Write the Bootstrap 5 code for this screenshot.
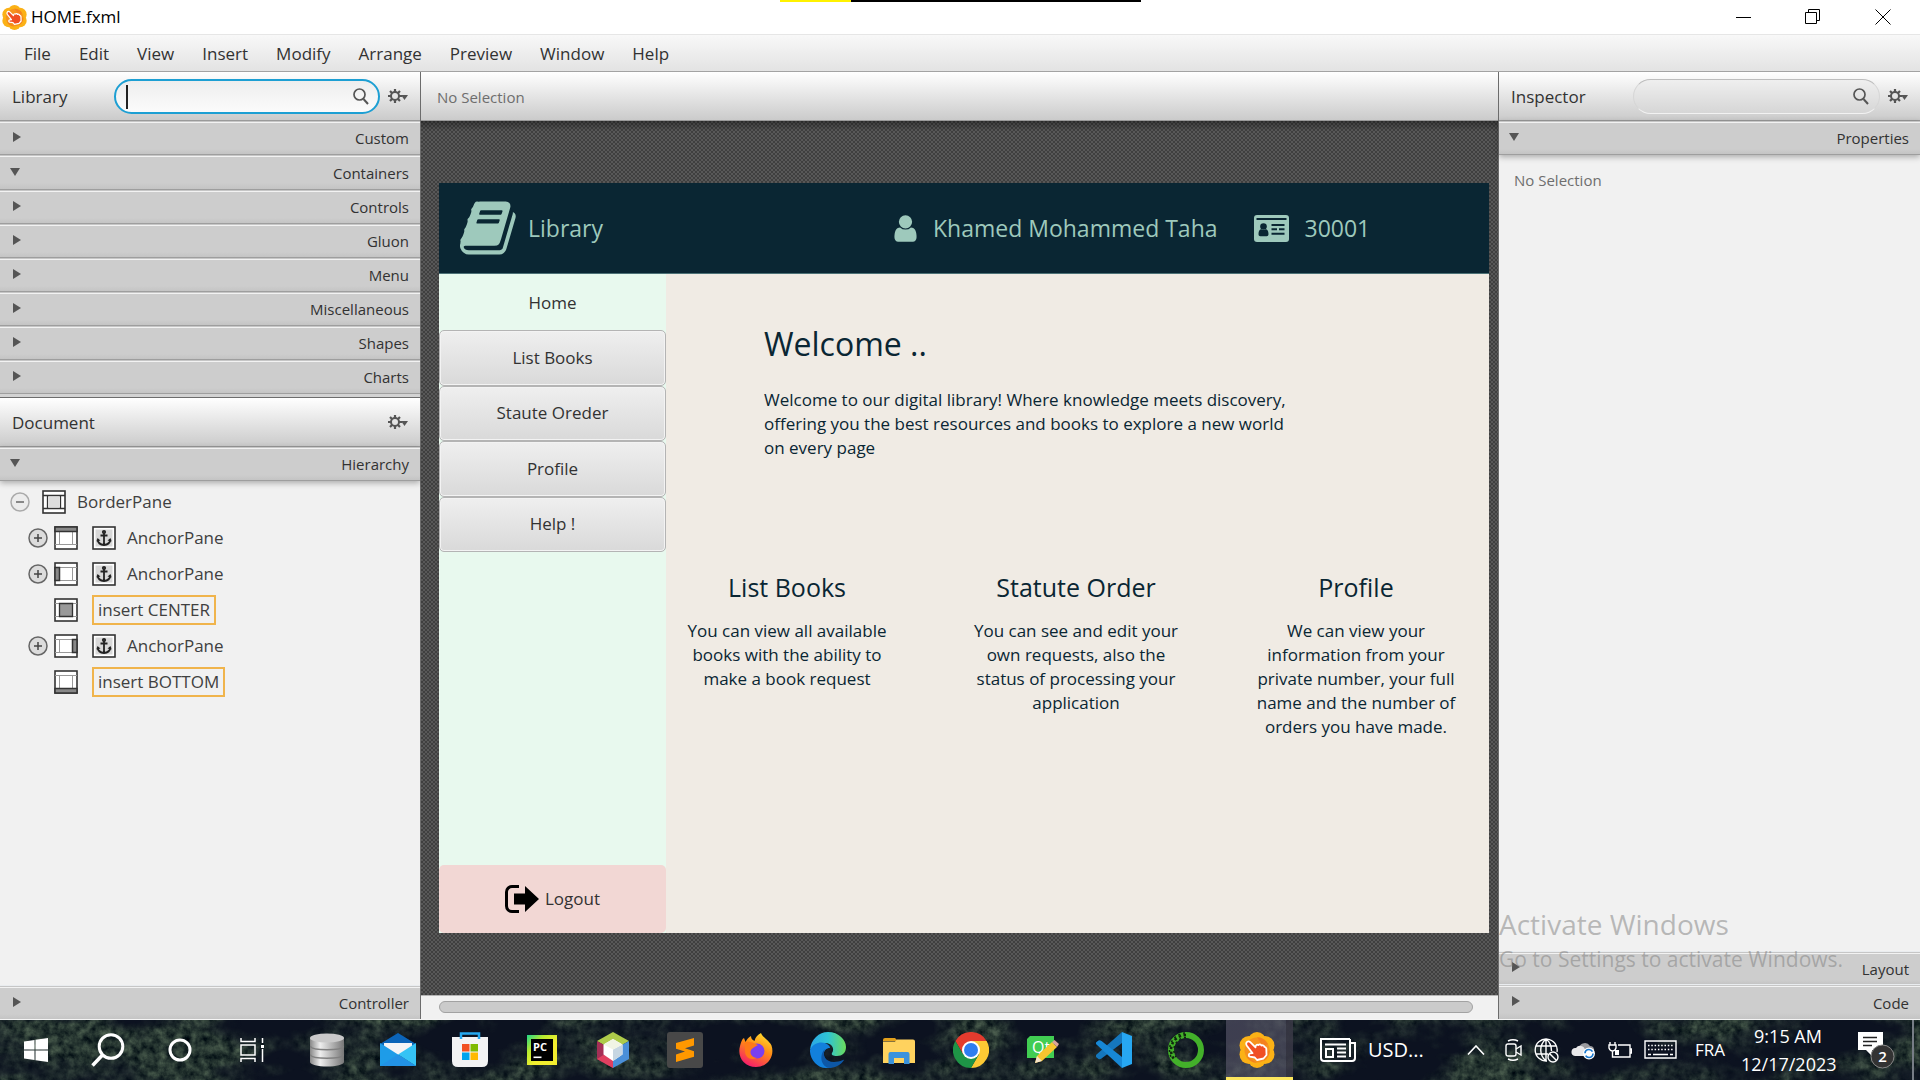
<!DOCTYPE html>
<html lang="en">
<head>
<meta charset="utf-8">
<meta name="viewport" content="width=device-width, initial-scale=1">
<title>HOME.fxml</title>
<link href="https://cdn.jsdelivr.net/npm/bootstrap@5.3.0/dist/css/bootstrap.min.css" rel="stylesheet">
<style>
  body { font-family: "Open Sans", "Noto Sans", sans-serif; font-size: 17px; line-height: 24px; color: #323232; background: #f1f1f1; min-height: 100vh; }
  button { font: inherit; color: inherit; background: none; border: 0; padding: 0; }
  svg { display: block; flex: none; }
  /* title bar and menu */
  .title-strip { height: 35px; background: #fff; color: #000; border-bottom: 1px solid #e6e6e6; padding: 0 29px 4px 2px; position: relative; }
  .share-mark { position: absolute; top: 0; left: 780px; width: 361px; height: 2px; background: linear-gradient(90deg, #fff200 71px, #000 71px); }
  .win-controls { gap: 54px; }
  .menu-strip { height: 37px; background: linear-gradient(#f8f8f8, #e3e3e3); border-bottom: 1px solid #a3a3a3; padding: 1px 24px 0; gap: 28px; }
  /* side panels */
  .side-pane { width: 421px; flex: none; background: #f1f1f1; }
  .side-left { border-right: 1px solid #6c6c6c; }
  .side-right { width: 422px; position: relative; border-left: 1px solid #6c6c6c; }
  .pane-head { height: 49px; background: linear-gradient(#fff, #cbcbcb); border-bottom: 1px solid #9a9a9a; padding: 0 11px 0 12px; flex: none; }
  .pane-head label, .pane-head span { padding-top: 2px; }
  .label-lib { width: 102px; }
  .label-insp { width: 122px; }
  .search-wrap { position: relative; height: 35px; flex: 1; }
  .search-wrap input { width: 100%; height: 35px; border-radius: 18px; border: 1px solid #d6d6d6; border-top-color: #bdbdbd; border-bottom-color: #f2f2f2; background: linear-gradient(#efefef, #d6d6d6); padding: 0 40px 0 14px; outline: 0; }
  .search-wrap input.is-active { border: 2px solid #1d9fd3; background: linear-gradient(#eee, #fbfbfb); }
  .search-wrap svg { position: absolute; right: 11px; top: 9px; }
  .pane-head .caret-bar { position: absolute; left: 12px; top: 6px; width: 2px; height: 24px; padding: 0; background: #222; }
  .fold-row { height: 34px; width: 100%; flex: none; display: flex; align-items: center; justify-content: space-between; font-size: 15px; padding: 1px 11px 0 13px; border-bottom: 1px solid #9e9e9e; background: linear-gradient(#c6c6c6 1px, #f2f2f2 1px, #f2f2f2 2px, #cdcdcd 2px, #cdcdcd 28px, #c4c4c4); }
  .fold-row::before { content: ""; border-left: 8px solid #555; border-top: 5px solid transparent; border-bottom: 5px solid transparent; margin-bottom: 3px; }
  .fold-row.is-open::before { border-top: 8px solid #555; border-left: 5px solid transparent; border-right: 5px solid transparent; border-bottom: 0; margin: 0 0 2px -3px; }
  .fold-row.tall { height: 35px; }
  .fold-row.drop { box-shadow: 0 2px 6px rgba(0,0,0,.3); }
  .split-band { height: 4px; background: #d2d2d2; border-bottom: 1px solid #6c6c6c; flex: none; }
  .muted-note { font-size: 15px; color: #6e6e6e; }
  .insp-note { padding: 13px 15px; }
  .tree-list { padding: 3px 0 0 10px; }
  .tree-list li { height: 36px; display: flex; align-items: center; color: #404040; }
  .tree-sub { padding-left: 18px; }
  .tree-knob { width: 20px; height: 20px; margin-right: 6px; }
  .tree-root .tree-knob { margin-right: 12px; }
  .tree-name { margin-left: 11px; }
  .slot-icon { margin-right: 14px; }
  .knob-gap { width: 26px; }
  .insert-tag { border: 2px solid #f0b44c; height: 30px; line-height: 26px; padding: 0 4px; }
  /* canvas */
  .canvas-col { flex: 1; min-width: 0; }
  .canvas-bed { flex: 1; padding: 62px 9px 62px 18px; background:
     linear-gradient(rgba(0,0,0,.35), rgba(0,0,0,0) 10px),
     radial-gradient(circle at 1px 1px, #3f3f3f 1px, transparent 1px) 0 0/4px 4px,
     radial-gradient(circle at 3px 3px, #3f3f3f 1px, transparent 1px) 0 0/4px 4px, #585858; }
  .scroll-lane { height: 24px; background: #f1f1f1; border-top: 1px solid #b5b5b5; padding: 5px 25px 0 18px; flex: none; }
  .scroll-thumb { height: 12px; border: 1px solid #a2a2a2; border-radius: 6px; background: #cbcbcb; }
  .app-head { height: 91px; flex: none; background: #0a2633; color: #9ec9bc; font-size: 23px; padding-left: 21px; border-bottom: 1px solid #4c7176; }
  .app-brand { margin-left: 8px; }
  .app-user { margin-left: 287px; gap: 12px; }
  .app-id { margin-left: 36px; gap: 16px; }
  .app-nav { width: 227px; flex: none; background: #e8f9ee; }
  .nav-home { height: 56px; padding-top: 2px; }
  .nav-stack { height: 222px; }
  .nav-key { flex: 1; border: 1px solid #b4b4b4; border-radius: 5px; background: linear-gradient(#efefef, #d9d9d9); box-shadow: inset 0 0 0 1px #f3f3f3; }
  .nav-exit { height: 68px; border-radius: 5px; background: #f2d7d4; gap: 6px; }
  .app-main { background: #f0ebe4; color: #0a2633; flex: 1; }
  .hero-copy { padding: 46px 0 0 98px; width: 640px; }
  .hero-copy h1 { font-size: 32px; line-height: 48px; font-weight: 400; margin: 0 0 20px; }
  .hero-copy p, .info-set p { margin: 0; }
  .info-set { padding: 109px 21px 0 0; text-align: center; }
  .info-set section { flex: 242 0 0; }
  .info-set section:nth-child(2) { flex-grow: 336; }
  .info-set section:nth-child(3) { flex-grow: 224; }
  .info-set h2 { font-size: 25px; line-height: 36px; font-weight: 400; margin: 0 0 14px; }
  .info-set p { width: 214px; margin: 0 auto; }
  /* watermark */
  .activate-note { position: absolute; left: 0; bottom: 44px; color: rgba(125,125,125,.5); white-space: nowrap; pointer-events: none; z-index: 2; }
  .activate-note div:first-child { font-size: 28px; line-height: 38px; }
  .activate-note div:last-child { font-size: 21px; line-height: 32px; }
  /* taskbar */
  .task-strip { height: 61px; flex: none; position: relative; overflow: hidden; background: #0c1220; border-top: 1px solid #f4f4f4; color: #fff; }
  .task-scene { position: absolute; inset: 0; width: 100%; height: 100%; }
  .task-row { position: relative; height: 60px; }
  .task-row button { display: flex; align-items: center; justify-content: center; height: 60px; }
  .sys-keys { width: 291px; flex: none; padding-right: 3px; }
  .sys-keys button, .pin-keys button { flex: 1 0 0; }
  .pin-keys { width: 1002px; flex: none; }
  .pin-keys .pin-live { background: linear-gradient(90deg, transparent 4px, rgba(95,92,112,.6) 4px, rgba(95,92,112,.6) 64px, rgba(60,58,72,.8) 64px); position: relative; }
  .pin-live::after { content: ""; position: absolute; left: 4px; right: 0; bottom: 0; height: 3px; background: #fde65d; }
  .news-key { margin-left: 27px; gap: 12px; font-size: 20px; }
  .tray-set { margin-left: auto; padding-right: 6px; height: 60px; }
  .tray-icons { gap: 12px; margin-right: 18px; }
  .tray-clock { font-size: 18px; line-height: 28px; text-align: center; width: 94px; margin: 0 23px 0 16px; }
  .tray-edge { width: 2px; height: 60px; background: #777d86; margin-left: 17px; }
</style>
</head>
<body class="d-flex flex-column">

<svg width="0" height="0" class="position-absolute" aria-hidden="true">
  <defs>
    <symbol id="i-gear" viewBox="0 0 21 14"><g fill="none" stroke="#555"><circle cx="7" cy="7" r="4" stroke-width="2"/><path d="M7 0v3M7 11v3M0 7h3M11 7h3M2 2l2 2M10 10l2 2M12 2l-2 2M4 10l-2 2" stroke-width="2.200"/></g><path d="M13 6h7l-3.500 5z" fill="#555"/></symbol>
    <symbol id="i-find" viewBox="0 0 16 17"><circle cx="6.500" cy="6.500" r="5.500" fill="none" stroke="#555" stroke-width="1.700"/><path d="M10.500 11l4.500 5" stroke="#555" stroke-width="2"/></symbol>
    <symbol id="i-plus" viewBox="0 0 20 20"><circle cx="10" cy="10" r="9" fill="#dcdcdc" stroke="#666" stroke-width="1.500"/><path d="M10 6v8M6 10h8" stroke="#444" stroke-width="1.500"/></symbol>
    <symbol id="i-minus" viewBox="0 0 20 20"><circle cx="10" cy="10" r="9" fill="#ececec" stroke="#aaa" stroke-width="1.500"/><path d="M6 10h8" stroke="#777" stroke-width="1.700"/></symbol>
    <symbol id="i-pane" viewBox="0 0 24 24"><rect x="1" y="1" width="22" height="22" fill="#fff" stroke="#333" stroke-width="1.600"/><path d="M1 5.500h22M1 18.500h22M5.500 5.500v13M18.500 5.500v13" stroke="#999" fill="none"/></symbol>
    <symbol id="i-anchor" viewBox="0 0 24 24"><rect x="1" y="1" width="22" height="22" fill="#fff" stroke="#333" stroke-width="1.600"/><rect x="3.500" y="3.500" width="17" height="17" fill="#d8d8d8"/><g fill="none" stroke="#222" stroke-width="1.800"><circle cx="12" cy="6" r="1.200"/><path d="M12 7v12M8.500 9.500h7M5.500 13.500c.5 3.500 3 5.200 6.500 5.500 3.500-.3 6-2 6.500-5.500"/></g><path d="M4.500 15.500l1-3.500 3 2.500zM19.500 15.500l-1-3.500-3 2.500z" fill="#222"/></symbol>
    <symbol id="i-scene" viewBox="0 0 36 36"><g fill="#fbb116"><circle cx="18" cy="9" r="9"/><circle cx="18" cy="27" r="9"/><circle cx="10" cy="13.500" r="9.500"/><circle cx="26" cy="13.500" r="9.500"/><circle cx="10" cy="22.500" r="9.500"/><circle cx="26" cy="22.500" r="9.500"/></g><circle cx="18" cy="18" r="12.500" fill="#f6921e"/><path d="M18 5a13 13 0 0 1 11 7l-5 3M31 18a13 13 0 0 1-6 11l-4-6M18 31A13 13 0 0 1 7 24" fill="#f47b20" opacity=".7"/><path d="M7.500 10.500c1-1.600 2.800-1.400 4-.2l5 5c0-2 1.300-3 2.800-2.300 1-1 2.500-.8 3.200.5 1.300-.6 2.500.1 3 1.400 1 .1 1.500.6 1.800 1.600l.2 6.500-3 3.500-6.500 1.500-2.200-2.500-4.800-.8c-2-.8-1.400-3 .3-3.300l2.300-.2-5.900-7.700c-.7-1-.7-2-.2-3z" fill="#f04e23" stroke="#fff" stroke-width="1.800" stroke-linejoin="round"/></symbol>
  </defs>
</svg>

<header>
  <div class="title-strip d-flex align-items-center justify-content-between">
    <div class="share-mark"></div>
    <div class="d-flex align-items-center gap-1 pt-1">
      <svg width="25" height="25"><use href="#i-scene"/></svg>
      <span>HOME.fxml</span>
    </div>
    <div class="win-controls d-flex pt-1">
      <button aria-label="Minimize"><svg width="15" height="16"><path d="M0 8.500h15" stroke="#000"/></svg></button>
      <button aria-label="Restore"><svg width="16" height="16" fill="none" stroke="#000"><path d="M.5 3.500h11v11H.5zM3.500 3.500v-3h11v11h-3"/></svg></button>
      <button aria-label="Close"><svg width="16" height="16" stroke="#000"><path d="M.5.5l15 15M15.500.5l-15 15"/></svg></button>
    </div>
  </div>
  <nav class="menu-strip d-flex align-items-center" aria-label="Main menu">
    <button>File</button><button>Edit</button><button>View</button><button>Insert</button><button>Modify</button><button>Arrange</button><button>Preview</button><button>Window</button><button>Help</button>
  </nav>
</header>

<main class="d-flex flex-grow-1">
  <aside class="side-pane side-left d-flex flex-column">
    <div class="pane-head d-flex align-items-center">
      <label class="label-lib" for="libFind">Library</label>
      <div class="search-wrap me-2"><input class="is-active" id="libFind" type="text"><span class="caret-bar"></span><svg width="16" height="17"><use href="#i-find"/></svg></div>
      <button aria-label="Library options"><svg width="21" height="14"><use href="#i-gear"/></svg></button>
    </div>
    <button class="fold-row">Custom</button>
    <button class="fold-row is-open tall">Containers</button>
    <button class="fold-row">Controls</button>
    <button class="fold-row">Gluon</button>
    <button class="fold-row">Menu</button>
    <button class="fold-row">Miscellaneous</button>
    <button class="fold-row">Shapes</button>
    <button class="fold-row">Charts</button>
    <div class="split-band"></div>
    <div class="pane-head d-flex align-items-center justify-content-between">
      <span>Document</span>
      <button aria-label="Document options"><svg width="21" height="14"><use href="#i-gear"/></svg></button>
    </div>
    <button class="fold-row is-open drop">Hierarchy</button>
    <ul class="tree-list list-unstyled mb-0 flex-grow-1">
      <li class="tree-root"><button class="tree-knob" aria-label="Collapse"><svg width="20" height="20"><use href="#i-minus"/></svg></button>
        <svg width="24" height="24" viewBox="0 0 24 24"><rect x="1" y="1" width="22" height="22" fill="#fff" stroke="#333" stroke-width="1.600"/><path d="M1 5.500h22M1 18.500h22M5.500 5.500v13M18.500 5.500v13" stroke="#333" stroke-width="1.300" fill="none"/><rect x="7" y="7" width="10" height="10" fill="#ddd"/></svg>
        <span class="tree-name">BorderPane</span></li>
      <li class="tree-sub"><button class="tree-knob" aria-label="Expand"><svg width="20" height="20"><use href="#i-plus"/></svg></button>
        <svg class="slot-icon" width="24" height="24"><use href="#i-pane"/><path d="M1 1h22v4.500H1z" fill="#888" stroke="#333" stroke-width="1.500"/></svg>
        <svg width="24" height="24"><use href="#i-anchor"/></svg><span class="tree-name">AnchorPane</span></li>
      <li class="tree-sub"><button class="tree-knob" aria-label="Expand"><svg width="20" height="20"><use href="#i-plus"/></svg></button>
        <svg class="slot-icon" width="24" height="24"><use href="#i-pane"/><path d="M1 5.500h4.500v13H1z" fill="#888" stroke="#333" stroke-width="1.500"/></svg>
        <svg width="24" height="24"><use href="#i-anchor"/></svg><span class="tree-name">AnchorPane</span></li>
      <li class="tree-sub"><span class="knob-gap"></span>
        <svg class="slot-icon" width="24" height="24"><use href="#i-pane"/><path d="M5.500 5.500h13v13h-13z" fill="#999" stroke="#333" stroke-width="1.300"/></svg>
        <span class="insert-tag">insert CENTER</span></li>
      <li class="tree-sub"><button class="tree-knob" aria-label="Expand"><svg width="20" height="20"><use href="#i-plus"/></svg></button>
        <svg class="slot-icon" width="24" height="24"><use href="#i-pane"/><path d="M18.500 5.500H23v13h-4.500z" fill="#888" stroke="#333" stroke-width="1.500"/></svg>
        <svg width="24" height="24"><use href="#i-anchor"/></svg><span class="tree-name">AnchorPane</span></li>
      <li class="tree-sub"><span class="knob-gap"></span>
        <svg class="slot-icon" width="24" height="24"><use href="#i-pane"/><path d="M1 18.500h22V23H1z" fill="#888" stroke="#333" stroke-width="1.500"/></svg>
        <span class="insert-tag">insert BOTTOM</span></li>
    </ul>
    <button class="fold-row border-top border-secondary-subtle border-bottom-0">Controller</button>
  </aside>

  <section class="canvas-col d-flex flex-column">
    <div class="pane-head d-flex align-items-center ps-3"><span class="muted-note">No Selection</span></div>
    <div class="canvas-bed d-flex flex-column">
      <div class="app-head d-flex align-items-center">
        <svg width="60" height="62" viewBox="0 0 1792 1792" preserveAspectRatio="none" fill="#9ec9bc"><path d="M1639 478q40 57 18 129l-275 906q-19 64-76.500 107.500t-122.500 43.500h-923q-77 0-148.500-53.500t-99.500-131.500q-24-67-2-127 0-4 3-27t4-37q1-8-3-21.500t-3-19.500q2-11 8-21t16.500-23.500 16.500-23.500q23-38 45-91.500t30-91.500q3-10 .5-30t-.5-28q3-11 17-28t17-23q21-36 42-92t25-90q1-9-2.500-32t.5-28q4-13 22-30.500t22-22.500q19-26 42.500-84.500t27.500-96.500q1-8-3-25.500t-2-26.500q2-8 9-18t18-23 17-21q8-12 16.500-30.500t15-35 16-36 19.500-32 26.500-23.500 36-11.500 47.500 5.500l-1 3q38-9 51-9h761q74 0 114 56t18 130l-274 906q-36 119-71.500 153.500t-128.500 34.500h-869q-27 0-38 15-11 16-1 43 24 70 144 70h923q29 0 56-15.500t35-41.500l300-987q7-22 5-57 38 15 59 43zm-1064 2q-4 13 2 22.500t20 9.500h608q13 0 25.500-9.500t16.500-22.500l21-64q4-13-2-22.500t-20-9.500h-608q-13 0-25.500 9.500t-16.500 22.500zm-83 256q-4 13 2 22.500t20 9.500h608q13 0 25.500-9.500t16.500-22.500l21-64q4-13-2-22.500t-20-9.500h-608q-13 0-25.500 9.500t-16.500 22.500z"/></svg>
        <span class="app-brand">Library</span>
        <div class="app-user d-flex align-items-center">
          <svg width="31" height="31" viewBox="0 0 1792 1792" fill="#9ec9bc"><path d="M1536 1399q0 109-62.500 187t-150.500 78h-854q-88 0-150.500-78t-62.500-187q0-85 8.500-160.500t31.500-152 58.500-131 94-89 134.500-34.500q131 128 313 128t313-128q76 0 134.500 34.500t94 89 58.500 131 31.500 152 8.500 160.500zm-256-887q0 159-112.500 271.500t-271.500 112.500-271.500-112.500-112.500-271.500 112.500-271.500 271.500-112.500 271.500 112.500 112.500 271.500z"/></svg>
          <span>Khamed Mohammed Taha</span>
        </div>
        <div class="app-id d-flex align-items-center">
          <svg width="35" height="27" viewBox="0 0 35 27"><rect width="35" height="27" rx="3" fill="#9ec9bc"/><g fill="#0a2633"><path d="M2.500 3h30v2h-30z"/><circle cx="9.500" cy="11.500" r="3.300"/><path d="M4.500 19c0-3 1.200-4.700 2.800-4.700 1.400 1 3 1 4.400 0 1.600 0 2.800 1.700 2.800 4.700 0 1.600-.8 2.200-1.800 2.200H6.300c-1 0-1.800-.6-1.800-2.200zM17.500 9h13v2h-13zM17.500 13.300h5.500v2h-5.500zM25 13.300h5.500v2H25zM17.500 17.800h13v2h-13z"/></g></svg>
          <span>30001</span>
        </div>
      </div>
      <div class="d-flex flex-grow-1">
        <nav class="app-nav d-flex flex-column" aria-label="Library app">
          <button class="nav-home">Home</button>
          <div class="nav-stack d-flex flex-column">
            <button class="nav-key">List Books</button>
            <button class="nav-key">Staute Oreder</button>
            <button class="nav-key">Profile</button>
            <button class="nav-key">Help !</button>
          </div>
          <button class="nav-exit mt-auto d-flex align-items-center justify-content-center">
            <svg width="34" height="28" viewBox="0 0 34 28"><path d="M14 1.500H7A5.500 5.500 0 0 0 1.500 7v14A5.500 5.500 0 0 0 7 26.500h7" fill="none" stroke="#000" stroke-width="3"/><path d="M9 8.500h11V1l14 13-14 13v-7.500H9z"/></svg>
            <span>Logout</span>
          </button>
        </nav>
        <div class="app-main">
          <div class="hero-copy">
            <h1>Welcome ..</h1>
            <p>Welcome to our digital library! Where knowledge meets discovery,<br>offering you the best resources and books to explore a new world<br>on every page</p>
          </div>
          <div class="info-set d-flex">
            <section><h2>List Books</h2><p>You can view all available books with the ability to make a book request</p></section>
            <section><h2>Statute Order</h2><p>You can see and edit your own requests, also the status of processing your application</p></section>
            <section><h2>Profile</h2><p>We can view your information from your private number, your full name and the number of orders you have made.</p></section>
          </div>
        </div>
      </div>
    </div>
    <div class="scroll-lane"><div class="scroll-thumb"></div></div>
  </section>

  <aside class="side-pane side-right d-flex flex-column">
    <div class="pane-head d-flex align-items-center">
      <label class="label-insp" for="inspFind">Inspector</label>
      <div class="search-wrap me-2"><input id="inspFind" type="text"><svg width="16" height="17"><use href="#i-find"/></svg></div>
      <button aria-label="Inspector options"><svg width="21" height="14"><use href="#i-gear"/></svg></button>
    </div>
    <button class="fold-row is-open drop">Properties</button>
    <div class="muted-note insp-note flex-grow-1">No Selection</div>
    <button class="fold-row border-top border-secondary-subtle">Layout</button>
    <button class="fold-row border-bottom-0">Code</button>
    <div class="activate-note"><div>Activate Windows</div><div>Go to Settings to activate Windows.</div></div>
  </aside>
</main>

<footer class="task-strip">
  <svg class="task-scene" aria-hidden="true">
    <filter id="woods" x="0" y="0" width="100%" height="100%" color-interpolation-filters="sRGB">
      <feTurbulence type="fractalNoise" baseFrequency=".009 .018" numOctaves="4" seed="8" result="big"/>
      <feColorMatrix in="big" type="matrix" values="0 0 0 0 1  0 0 0 0 1  0 0 0 0 1  4 0 0 0 -1.500" result="zone"/>
      <feTurbulence type="fractalNoise" baseFrequency=".12" numOctaves="4" seed="3"/>
      <feColorMatrix type="matrix" values=".42 0 0 0 -.06  .46 0 0 0 -.02  .34 0 0 0 .02  0 0 0 0 1"/>
      <feComposite in2="zone" operator="in"/>
    </filter>
    <rect width="100%" height="100%" filter="url(#woods)"/>
  </svg>
  <div class="task-row d-flex align-items-center">
    <div class="sys-keys d-flex">
      <button aria-label="Start"><svg width="24" height="24" fill="#fff"><path d="M0 3.500l10.500-1.500v9.500H0zM11.500 1.800L24 0v11.500H11.500zM0 12.500h10.500V22L0 20.500zM11.500 12.500H24V24l-12.500-1.800z"/></svg></button>
      <button aria-label="Search"><svg width="34" height="34" fill="none" stroke="#fff"><circle cx="20" cy="13.500" r="11.800" stroke-width="3"/><path d="M11.500 22L1.500 32.500" stroke-width="3.500"/></svg></button>
      <button aria-label="Cortana"><svg width="24" height="24" fill="none"><circle cx="12" cy="12" r="10" stroke="#fff" stroke-width="3"/></svg></button>
      <button aria-label="Task view"><svg width="24" height="24" fill="none" stroke="#fff" stroke-width="1.500"><path d="M1 7h14v10H1zM1 0v3.500h14V0M1 24v-3.500h14V24M22.500 0v5M22.500 11v13"/><path d="M21 7h3v3h-3z" fill="#fff" stroke="none"/></svg></button>
    </div>
    <div class="pin-keys d-flex">
      <button aria-label="Database"><svg width="34" height="34"><defs><linearGradient id="g-db"><stop stop-color="#888"/><stop offset=".3" stop-color="#eee"/><stop offset=".6" stop-color="#bbb"/><stop offset="1" stop-color="#777"/></linearGradient></defs><path d="M0 5h34v24c0 2.500-8 4.500-17 4.500S0 31.500 0 29z" fill="url(#g-db)"/><ellipse cx="17" cy="5" rx="17" ry="4.500" fill="#c9c9c9"/><path d="M0 13c2 5 32 5 34 0M0 21.500c2 5 32 5 34 0" fill="none" stroke="#808080" stroke-width="1.500"/></svg></button>
      <button aria-label="Mail"><svg width="36" height="34"><path d="M0 11L18 0l18 11v10H0z" fill="#0b64b8"/><path d="M4 10h28v12H4z" fill="#f4f4f6"/><path d="M0 10l36 23H0z" fill="#1e9ce8"/><path d="M36 10L18 21.500 36 33z" fill="#35c3f5"/><path d="M0 33l18-11.500L36 33z" fill="#2292e6"/></svg></button>
      <button aria-label="Store"><svg width="36" height="36"><path d="M0 5h36v24q0 6-6 6H6q-6 0-6-6z" fill="#f3f3f4"/><path d="M9 7V1.500h18V7" fill="none" stroke="#25a8ef" stroke-width="2.500"/><path d="M10 12h7.500v7.500H10z" fill="#f25022"/><path d="M18.500 12H26v7.500h-7.500z" fill="#7fba00"/><path d="M10 20.500h7.500V28H10z" fill="#00a4ef"/><path d="M18.500 20.500H26V28h-7.500z" fill="#ffb900"/></svg></button>
      <button aria-label="PyCharm"><svg width="30" height="30"><defs><linearGradient id="g-pc" x2="1" y2="1"><stop stop-color="#21d789"/><stop offset=".3" stop-color="#b8e92e"/><stop offset=".6" stop-color="#f3ee2f"/></linearGradient></defs><path d="M0 0h30v30H0z" fill="url(#g-pc)"/><path d="M4 4h22v22H4z"/><text x="6" y="16" font-size="11" font-weight="700" fill="#fff" font-family="Open Sans, sans-serif">PC</text><path d="M6.500 21.500h8v1.600h-8z" fill="#fff"/></svg></button>
      <button aria-label="NetBeans"><svg width="32" height="36"><path d="M16 0l16 9-16 9L0 9z" fill="#aecb4a"/><path d="M0 9l16 9v18L0 27z" fill="#a52f56"/><path d="M32 9l-16 9v18l16-9z" fill="#4a8fd8"/><path d="M0 27l8-5 8 5v9z" fill="#e04060"/><path d="M16 7l9.500 5.500v10L16 29l-9.500-6.500v-10z" fill="#fff"/><path d="M16 17.500l9.500-5v10L16 29z" fill="#c7d6e2"/><path d="M16 7l9.500 5.500-9.500 5-9.500-5z" fill="#f1f4e4"/></svg></button>
      <button aria-label="Sublime Text"><svg width="36" height="36"><rect width="36" height="36" rx="3" fill="#484848"/><path d="M27 6v7.500l-9 2.800 9 3v5.500L9 30v-7.500l9-3-9-2.700V11z" fill="#ff9800"/></svg></button>
      <button aria-label="Firefox"><svg width="34" height="34"><defs><linearGradient id="g-fx" x1=".8" y1="0" x2=".3" y2="1"><stop stop-color="#ffe22e"/><stop offset=".45" stop-color="#ff8a16"/><stop offset="1" stop-color="#f5196e"/></linearGradient></defs><path d="M22 0c1 4 8 7 10.500 12.500C36 23 29 34 17 34S-2 24 1 13C2 9 3 6 5 5l1.500 4C8 6 10 4 12 3c0 2 1 4 3.500 5 1-4 3-6 6.500-8z" fill="url(#g-fx)"/><circle cx="18" cy="18" r="7.500" fill="#7a3ff0"/><path d="M5 10c5-3 9 0 14 2-3 2-6 3-7 5-2 4 2 8 6 8-7 3-12-1-12-7 0-3 0-5-1-8z" fill="#ff7a18"/></svg></button>
      <button aria-label="Edge"><svg width="36" height="36"><defs><linearGradient id="g-ed" x2="1"><stop stop-color="#2ba6e6"/><stop offset=".5" stop-color="#2fc4d4"/><stop offset="1" stop-color="#6bdb5b"/></linearGradient></defs><path d="M0 18C1 7 9 0 18 0c11 0 18 8 18 15 0 6-4 9-9 9-4 0-6-1-5-3 3-4 0-10-7-10-6 0-12 3-15 7z" fill="url(#g-ed)"/><path d="M0 18c3-7 10-8.500 15-7 3 1 5 3 5 5-5 0-8 5-5 11 2 4 8 6 13 4-3 3-7 5-12 5C7 36-.5 27 0 18z" fill="#1280dc"/><path d="M15 17c-4 8 3 17 18 11 1-.4 1 0 .7.600C31 33 25 36 20 36c-8 0-12-12-5-19z" fill="#0d57a6"/></svg></button>
      <button aria-label="File Explorer"><svg width="32" height="27"><path d="M0 3q0-2 2-2h10l3 3H0z" fill="#e2a01c"/><path d="M0 4.500h12l2-2h16q2 0 2 2V26H0z" fill="#ffd25e"/><path d="M5.500 27V17q0-2 2-2h17q2 0 2 2v10H21v-6H11v6z" fill="#3b92dc"/></svg></button>
      <button aria-label="Chrome"><svg width="36" height="36"><path d="M2.400 9A18 18 0 0 1 33.600 9H18L10.200 22.500z" fill="#e33b2e"/><path d="M33.600 9A18 18 0 0 1 18 36l7.800-13.500V13.500L18 9z" fill="#fcc934"/><path d="M2.400 9A18 18 0 0 0 18 36l7.800-13.500H10.200z" fill="#1e9446"/><path d="M18 9h15.600l-7.800 13.500z" fill="#fcc934"/><circle cx="18" cy="18" r="9" fill="#fff"/><circle cx="18" cy="18" r="7" fill="#2e7df0"/></svg></button>
      <button aria-label="Qt Designer"><svg width="32" height="28"><path d="M3 0h24v22H0V3z" fill="#41cd52"/><text x="5" y="17" font-size="16" fill="#fff" font-family="Open Sans, sans-serif">Qt</text><path d="M8 27l2-7L25 6l5 5-15 14z" fill="#f6c52f"/><path d="M25 6l2.500-2 4.500 4-2 3z" fill="#d9a39a"/><path d="M8 27l2-7 5 5z" fill="#f5e3c8"/></svg></button>
      <button aria-label="Visual Studio Code"><svg width="36" height="36"><path d="M26 0L.5 22.500Q-1 24 .5 25.500l2 1.500q1.500.6 3-.5L26 11z" fill="#1577bd"/><path d="M26 36L.5 12.500Q-1 11 .5 10l2-1.500q1.500-.6 3 .5L26 25z" fill="#1788d6"/><path d="M26 0l10 4v28l-10 4z" fill="#27a7f2"/></svg></button>
      <button aria-label="Anaconda"><svg width="36" height="36" fill="none"><circle cx="18" cy="18" r="15" stroke="#43b02a" stroke-width="6"/><path d="M18 3A15 15 0 0 0 6 27" stroke="#10240f" stroke-width="2.500" stroke-dasharray="2.500 2.500"/><path d="M17 1A17 17 0 0 0 3 25M18 5.500A12.500 12.500 0 0 0 8 25" stroke="#10240f" stroke-width="1.500" stroke-dasharray="2 3"/></svg></button>
      <button class="pin-live" aria-label="Scene Builder"><svg width="36" height="36"><use href="#i-scene"/></svg></button>
    </div>
    <button class="news-key"><svg width="36" height="24" fill="none" stroke="#fff" stroke-width="2"><path d="M30 1H1v19q0 3 3 3h28q3 0 3-3V5h-5M30 1v18M5 6.500h21M17 10.500h9M17 14.500h9M17 18.500h9"/><path d="M6 11h7v8H6z"/></svg><span>USD...</span></button>
    <div class="tray-set d-flex align-items-center">
      <div class="tray-icons d-flex align-items-center">
        <svg width="18" height="10" fill="none" stroke="#fff" stroke-width="1.600"><path d="M1 9.500L9 1l8 8.500"/></svg>
        <svg class="ms-2" width="17" height="22" fill="none" stroke="#fff" stroke-width="1.400"><rect x="1" y="5" width="10" height="12" rx="2"/><path d="M11 10l5-3v9l-5-3M3 2q5-2.500 10 0M3 20q5 2.500 10 0"/></svg>
        <svg width="25" height="25" fill="none" stroke="#fff" stroke-width="1.400"><path d="M23 14A11 11 0 1 0 13 23M12 1c-7 6-7 16 0 22M12 1c4 3 5.500 7 5.500 12M2 8h20M2 16h12M12 1v22"/><circle cx="19" cy="19" r="5"/><path d="M15.500 15.500l7 7"/></svg>
        <svg width="25" height="20"><path d="M8 8a6 6 0 0 1 11-2 4 4 0 0 1 0 8H8z" fill="#9a9a9e"/><path d="M4 16a4 4 0 0 1 1-8 5 5 0 0 1 9 2v6z" fill="#e8e8ea"/><circle cx="18" cy="13.500" r="6" fill="#fff"/><circle cx="18" cy="13.500" r="4" fill="none" stroke="#1878d0" stroke-width="1.700" stroke-dasharray="10 2.500"/></svg>
        <svg width="24" height="18" fill="none" stroke="#fff" stroke-width="1.400"><path d="M10 4h12v12H7M22 8h1.500v4H22M2 1v3M7 1v3M1 4h7v3q-1 3-3.500 3T1 7zM4.500 10v6H7"/><path d="M7 9h4v5H7z" fill="#fff" stroke="none"/></svg>
        <svg width="33" height="20" fill="none" stroke="#fff" stroke-width="1.400"><path d="M1 1h31v17H1z"/><path d="M4 5.500h25M4 9.500h25" stroke-dasharray="1.500 1.800"/><path d="M4 14.500h3M9 14.500h15M26 14.500h3"/></svg>
      </div>
      <span>FRA</span>
      <div class="tray-clock">9:15 AM<br>12/17/2023</div>
      <svg width="37" height="38"><path d="M0 1h25v18H14v6l-6-6H0z" fill="#fff"/><path d="M5 6.500h14M5 10.500h14M5 14.500h9" stroke="#222" stroke-width="1.300"/><circle cx="24.500" cy="25.500" r="11.500" fill="#333" stroke="#888"/><text x="24.500" y="31" font-size="15" font-weight="600" fill="#fff" text-anchor="middle" font-family="Open Sans, sans-serif">2</text></svg>
      <div class="tray-edge"></div>
    </div>
  </div>
</footer>
<script src="https://cdn.jsdelivr.net/npm/bootstrap@5.3.0/dist/js/bootstrap.bundle.min.js"></script>
</body>
</html>
